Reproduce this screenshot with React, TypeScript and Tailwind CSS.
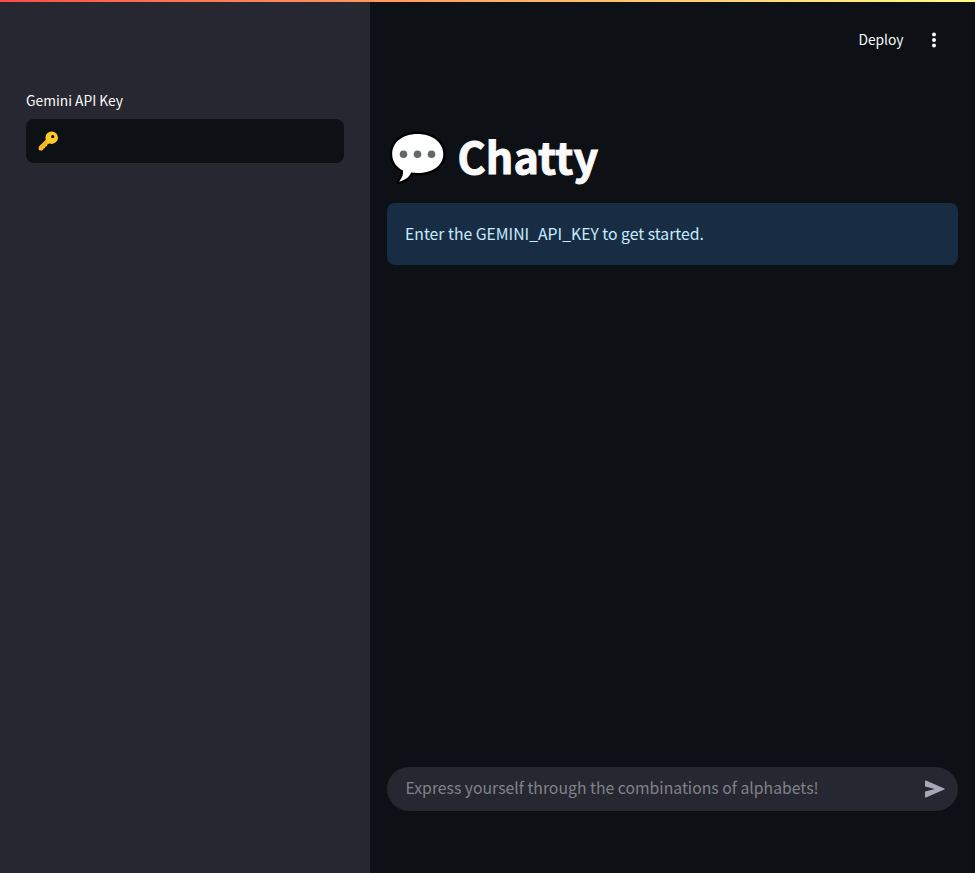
function KeyIcon() {
  return (
    <svg className="h-5 w-5" viewBox="0 0 20 20" aria-hidden="true">
      <path d="M9.2 7.500 1.400 15c-.9.9-1.100 3.200-.3 4 .8.900 2.900.7 3.700-.1l.8-1.400 1.300-.2.5-1.700 1.500-.4.5-1.600 3.600-2.200Z" fill="#fcbf22" />
      <path d="M9.500 10 3 16.600" stroke="#e49a18" strokeWidth="0.8" strokeLinecap="round" />
      <path fillRule="evenodd" d="M13.700.5a6.300 6.200 0 1 0 0 12.400 6.300 6.200 0 0 0 0-12.400Zm1 3.500a1.600 1.600 0 1 1 0 3.200 1.600 1.600 0 0 1 0-3.200Z" fill="#fdca2c" />
    </svg>
  );
}

function SpeechIcon() {
  return (
    <svg className="h-[54px] w-[56px] shrink-0 overflow-visible" viewBox="0 0 56 54" aria-hidden="true">
      <path
        d="M28.500 2C13.500 2 3.200 10.500 3.200 22c0 7.200 4 13.200 10.800 16.600.5 3.600-.7 7.400-4 11.200 6-1.300 10.500-5 12.200-9.200 2 .3 4.200.5 6.300.5 14.500 0 25.800-7.400 25.800-19.100S43 2 28.500 2Z"
        fill="#fff"
        stroke="#000"
        strokeWidth="5"
        strokeLinejoin="round"
        paintOrder="stroke"
      />
      <circle cx="14.500" cy="22.200" r="3.800" fill="#646968" />
      <circle cx="28.500" cy="22.200" r="3.800" fill="#646968" />
      <circle cx="42.500" cy="22.200" r="3.800" fill="#646968" />
    </svg>
  );
}

export default function App() {
  return (
    <div className="flex h-[873px] w-[975px] flex-col overflow-hidden bg-[#0d1115] font-['Noto_Sans_CJK_JP','Noto_Sans',sans-serif] text-[#fafafa]">
      <div className="h-0.5 shrink-0 bg-linear-to-r from-[#ff4b4b] to-[#fffd80]" />
      <div className="flex min-h-0 flex-1">
        <aside className="w-[370px] shrink-0 bg-[#262730] px-[26px] pt-[87px]">
          <label className="block h-[30px] text-[13.8px] leading-[22px]">Gemini API Key</label>
          <div className="flex h-11 items-center rounded-lg bg-[#0d1115] px-3">
            <KeyIcon />
          </div>
        </aside>
        <main className="flex min-w-0 flex-1 flex-col px-[17px]">
          <header className="flex h-[76px] shrink-0 items-center justify-end gap-[28.5px] pr-[22px]">
            <button className="pb-[2px] text-[13.8px] leading-5">Deploy</button>
            <svg className="h-4 w-1" viewBox="0 0 4 16" fill="currentColor" aria-hidden="true">
              <circle cx="2" cy="2.500" r="2" />
              <circle cx="2" cy="8" r="2" />
              <circle cx="2" cy="13.500" r="2" />
            </svg>
          </header>
          <h1 className="mt-[52px] flex h-[58px] items-center gap-[12.5px] pl-[2px] text-[43px] leading-[58px] font-bold">
            <SpeechIcon />
            <span className="pb-[9px] tracking-[0.1px] [-webkit-text-stroke:1px_currentColor]">Chatty</span>
          </h1>
          <div className="mt-[15px] flex h-[62px] items-center rounded-lg bg-[#182d43] pl-[18px] text-[15.75px] leading-6 text-[#c7ebff]">
            Enter the GEMINI_API_KEY to get started.
          </div>
          <div className="mt-auto mb-[62px] flex h-11 items-center justify-between rounded-full bg-[#262730] pr-[13px] pl-[18.5px] text-[15.77px] leading-6 text-[#81828b]">
            <span className="pb-[2px]">Express yourself through the combinations of alphabets!</span>
            <svg className="h-[18px] w-5" viewBox="0 0 20 18" fill="#a6a8b5" aria-hidden="true">
              <path d="M0 1.300Q0 .2 1 .6L19.300 8.400q1.200.6 0 1.200L1 17.400q-1 .4-1-.7v-5.100L9.800 9 0 6.400Z" />
            </svg>
          </div>
        </main>
      </div>
    </div>
  );
}
